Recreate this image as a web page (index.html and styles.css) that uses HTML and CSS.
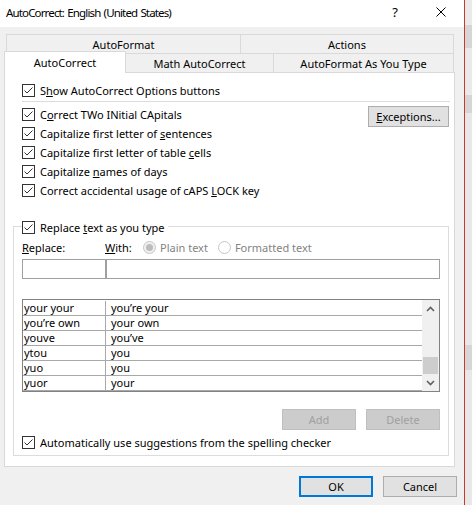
FILE: index.html
```html
<!DOCTYPE html>
<html>
<head>
<meta charset="utf-8">
<link rel="stylesheet" href="styles.css">
</head>
<body>
<div class="dialog">
  <div class="titlebar">
    <div class="title">AutoCorrect: English (United States)</div>
    <div class="tbtn help">?</div>
    <div class="tbtn close"><svg width="10" height="10" viewBox="0 0 10 10"><path d="M0.5 0.5 L9.5 9.5 M9.5 0.5 L0.5 9.5" stroke="#000" stroke-width="1" fill="none"/></svg></div>
  </div>
  <div class="tabs">
    <div class="tabrow row1">
      <div class="tab t-autoformat">AutoFormat</div>
      <div class="tab t-actions">Actions</div>
    </div>
    <div class="tabrow row2">
      <div class="tab selected t-autocorrect">AutoCorrect</div>
      <div class="tab t-math">Math AutoCorrect</div>
      <div class="tab t-ayt">AutoFormat As You Type</div>
    </div>
  </div>
  <div class="panel">
    <div class="section">
      <div class="row"><svg class="cb" viewBox="0 0 13 13"><rect x="0.5" y="0.5" width="12" height="12" fill="#fff" stroke="#333"/><path d="M2.5 6.5 L5 9 L10.5 3.5" fill="none" stroke="#333"/></svg><span>S<u>h</u>ow AutoCorrect Options buttons</span></div>
      <div class="sep"></div>
      <div class="opts">
        <div class="optcol">
          <div class="row"><svg class="cb" viewBox="0 0 13 13"><rect x="0.5" y="0.5" width="12" height="12" fill="#fff" stroke="#333"/><path d="M2.5 6.5 L5 9 L10.5 3.5" fill="none" stroke="#333"/></svg><span>C<u>o</u>rrect TWo INitial CApitals</span></div>
          <div class="row"><svg class="cb" viewBox="0 0 13 13"><rect x="0.5" y="0.5" width="12" height="12" fill="#fff" stroke="#333"/><path d="M2.5 6.5 L5 9 L10.5 3.5" fill="none" stroke="#333"/></svg><span>Capitalize first letter of <u>s</u>entences</span></div>
          <div class="row"><svg class="cb" viewBox="0 0 13 13"><rect x="0.5" y="0.5" width="12" height="12" fill="#fff" stroke="#333"/><path d="M2.5 6.5 L5 9 L10.5 3.5" fill="none" stroke="#333"/></svg><span>Capitalize first letter of table <u>c</u>ells</span></div>
          <div class="row"><svg class="cb" viewBox="0 0 13 13"><rect x="0.5" y="0.5" width="12" height="12" fill="#fff" stroke="#333"/><path d="M2.5 6.5 L5 9 L10.5 3.5" fill="none" stroke="#333"/></svg><span>Capitalize <u>n</u>ames of days</span></div>
          <div class="row"><svg class="cb" viewBox="0 0 13 13"><rect x="0.5" y="0.5" width="12" height="12" fill="#fff" stroke="#333"/><path d="M2.5 6.5 L5 9 L10.5 3.5" fill="none" stroke="#333"/></svg><span>Correct accidental usage of cAPS <u>L</u>OCK key</span></div>
        </div>
        <div class="btn exceptions"><u>E</u>xceptions...</div>
      </div>
    </div>
    <div class="group">
      <div class="row header"><svg class="cb" viewBox="0 0 13 13"><rect x="0.5" y="0.5" width="12" height="12" fill="#fff" stroke="#333"/><path d="M2.5 6.5 L5 9 L10.5 3.5" fill="none" stroke="#333"/></svg><span>Replace <u>t</u>ext as you type</span></div>
      <div class="labels">
        <div class="lbl-replace"><u>R</u>eplace:</div>
        <div class="lbl-with"><u>W</u>ith:</div>
        <div class="radio"><span class="rb on"></span><span class="dis">Plain text</span></div>
        <div class="radio"><span class="rb"></span><span class="dis">Formatted text</span></div>
      </div>
      <div class="inputs">
        <div class="inp inp-replace"></div>
        <div class="inp inp-with"></div>
      </div>
      <div class="list">
        <div class="rows">
          <div class="lrow"><div class="c1">your your</div><div class="c2">you’re your</div></div>
          <div class="lrow"><div class="c1">you’re own</div><div class="c2">your own</div></div>
          <div class="lrow"><div class="c1">youve</div><div class="c2">you’ve</div></div>
          <div class="lrow"><div class="c1">ytou</div><div class="c2">you</div></div>
          <div class="lrow"><div class="c1">yuo</div><div class="c2">you</div></div>
          <div class="lrow"><div class="c1">yuor</div><div class="c2">your</div></div>
        </div>
        <div class="scrollbar">
          <div class="arrow up"><svg width="9" height="6" viewBox="0 0 9 6"><path d="M1 5 L4.5 1.5 L8 5" fill="none" stroke="#606060" stroke-width="1.6"/></svg></div>
          <div class="track"><div class="thumb"></div></div>
          <div class="arrow down"><svg width="9" height="6" viewBox="0 0 9 6"><path d="M1 1 L4.5 4.5 L8 1" fill="none" stroke="#606060" stroke-width="1.6"/></svg></div>
        </div>
      </div>
      <div class="listbtns">
        <div class="btn disabled">Add</div>
        <div class="btn disabled">Delete</div>
      </div>
      <div class="row autorow"><svg class="cb" viewBox="0 0 13 13"><rect x="0.5" y="0.5" width="12" height="12" fill="#fff" stroke="#333"/><path d="M2.5 6.5 L5 9 L10.5 3.5" fill="none" stroke="#333"/></svg><span>Automatically use su<u>g</u>gestions from the spelling checker</span></div>
    </div>
  </div>
  <div class="footer">
    <div class="btn ok">OK</div>
    <div class="btn cancel">Cancel</div>
  </div>
</div>
<div class="strip"></div>
</body>
</html>
```
FILE: styles.css
```css
* { box-sizing: border-box; }
body {
  margin: 0;
  width: 472px;
  height: 505px;
  overflow: hidden;
  display: flex;
  font-family: "Noto Sans", "Liberation Sans", sans-serif;
  font-size: 11px;
  color: #000;
  background: #e9e9e9;
}
u { text-decoration: underline; text-underline-offset: 1px; }
.dialog {
  width: 465px;
  height: 505px;
  background: #f0f0f0;
  border-right: 1px solid #c9382a;
  display: flex;
  flex-direction: column;
}
.strip {
  flex: 1;
  background: linear-gradient(to bottom, #eaeaea 0, #eaeaea 25px, #d6d6d6 25px, #d6d6d6 48px, #eaeaea 48px, #eaeaea 95px, #d6d6d6 95px, #d6d6d6 113px, #e8e8e8 113px, #e8e8e8 345px, #d6d6d6 345px, #d6d6d6 370px, #e8e8e8 370px);
}
.titlebar {
  height: 27px;
  background: #fff;
  display: flex;
  align-items: center;
  flex-shrink: 0;
}
.title { flex: 1; padding-left: 6px; padding-bottom: 3px; font-size: 11.5px; letter-spacing: -0.85px; word-spacing: 1px; white-space: nowrap; }
.tbtn {
  width: 46px;
  height: 27px;
  display: flex;
  align-items: center;
  justify-content: center;
}
.help { font-size: 13px; padding-bottom: 4px; }
.close { padding-bottom: 3px; }
.tabs { padding-top: 7px; flex-shrink: 0; }
.tabrow { display: flex; height: 19px; align-items: flex-start; }
.row1 { margin-left: 6px; }
.row2 { margin-left: 4px; }
.tab {
  height: 19px;
  display: flex;
  align-items: center;
  justify-content: center;
  border-top: 1px solid #d9d9d9;
  border-right: 1px solid #d9d9d9;
  padding-top: 1px;
}
.row1 .tab:first-child { border-left: 1px solid #d9d9d9; }
.t-autoformat { width: 235px; }
.t-actions { width: 213px; }
.t-autocorrect { width: 122px; }
.t-math { width: 148px; }
.t-ayt { width: 180px; }
.tab.selected {
  position: relative;
  z-index: 1;
  height: 22px;
  margin-top: -2px;
  background: #fff;
  border-left: 1px solid #d9d9d9;
  padding-top: 0;
  padding-bottom: 1px;
}
.panel {
  margin-left: 4px;
  width: 451px;
  height: 395px;
  flex-shrink: 0;
  background: #fff;
  border: 1px solid #d9d9d9;
}
.section { padding: 8px 4px 0 17px; }
.row {
  height: 19px;
  display: flex;
  align-items: center;
  gap: 5px;
  white-space: nowrap;
}
.cb { width: 13px; height: 13px; flex-shrink: 0; }
.sep { height: 1px; background: #dcdcdc; margin-top: 1px; }
.opts { display: flex; margin-top: 3px; }
.optcol { flex: 1; }
.btn {
  height: 21px;
  width: 74px;
  display: flex;
  align-items: center;
  justify-content: center;
  background: #e1e1e1;
  border: 1px solid #adadad;
  padding-bottom: 1px;
}
.exceptions { width: 81px; margin-top: 1px; margin-right: 1px; }
.group {
  margin: 26px 0 0 8px;
  width: 436px;
  border: 1px solid #dcdcdc;
  padding: 0 8px 3px 8px;
}
.header {
  margin-top: -9px;
  width: fit-content;
  background: #fff;
  padding-right: 3px;
}
.labels {
  margin-top: 1px;
  height: 19px;
  display: flex;
  align-items: center;
}
.lbl-replace { width: 83px; }
.lbl-with { width: 38px; }
.radio { display: flex; align-items: center; gap: 4px; margin-right: 10px; }
.rb {
  width: 13px;
  height: 13px;
  border-radius: 50%;
  border: 1px solid #c6c6c6;
  background: #fff;
  display: flex;
  align-items: center;
  justify-content: center;
}
.rb.on { background: #f0f0f0; }
.rb.on::after {
  content: "";
  width: 7px;
  height: 7px;
  border-radius: 50%;
  background: #bcbcbc;
}
.dis { color: #838383; }
.inputs { display: flex; margin-top: 2px; height: 20px; }
.inp { height: 20px; border: 1px solid #a0a0a0; background: #fff; }
.inp-replace { width: 84px; }
.inp-with { width: 334px; }
.list {
  margin-top: 20px;
  height: 93px;
  border: 1px solid #828282;
  display: flex;
}
.rows { flex: 1; padding-top: 1px; }
.lrow {
  height: 15px;
  display: flex;
  border-bottom: 1px solid #a8a8a8;
  line-height: 14px;
  white-space: nowrap;
}
.c1 { width: 83px; border-right: 1px solid #a8a8a8; padding-left: 1px; }
.c2 { flex: 1; padding-left: 5px; }
.scrollbar {
  width: 17px;
  background: #f0f0f0;
  display: flex;
  flex-direction: column;
}
.arrow { height: 17px; display: flex; align-items: center; justify-content: center; }
.track { flex: 1; display: flex; flex-direction: column; justify-content: flex-end; }
.thumb { height: 17px; margin: 0 1px 0 1px; background: #cdcdcd; }
.listbtns {
  margin-top: 17px;
  display: flex;
  justify-content: flex-end;
  gap: 10px;
}
.btn.disabled { background: #cccccc; border-color: #bfbfbf; color: #a0a0a0; }
.autorow { margin-top: 3px; }
.footer {
  margin-top: 9px;
  display: flex;
  justify-content: flex-end;
  gap: 10px;
  padding-right: 7px;
}
.ok { border: 2px solid #0078d7; }
```
